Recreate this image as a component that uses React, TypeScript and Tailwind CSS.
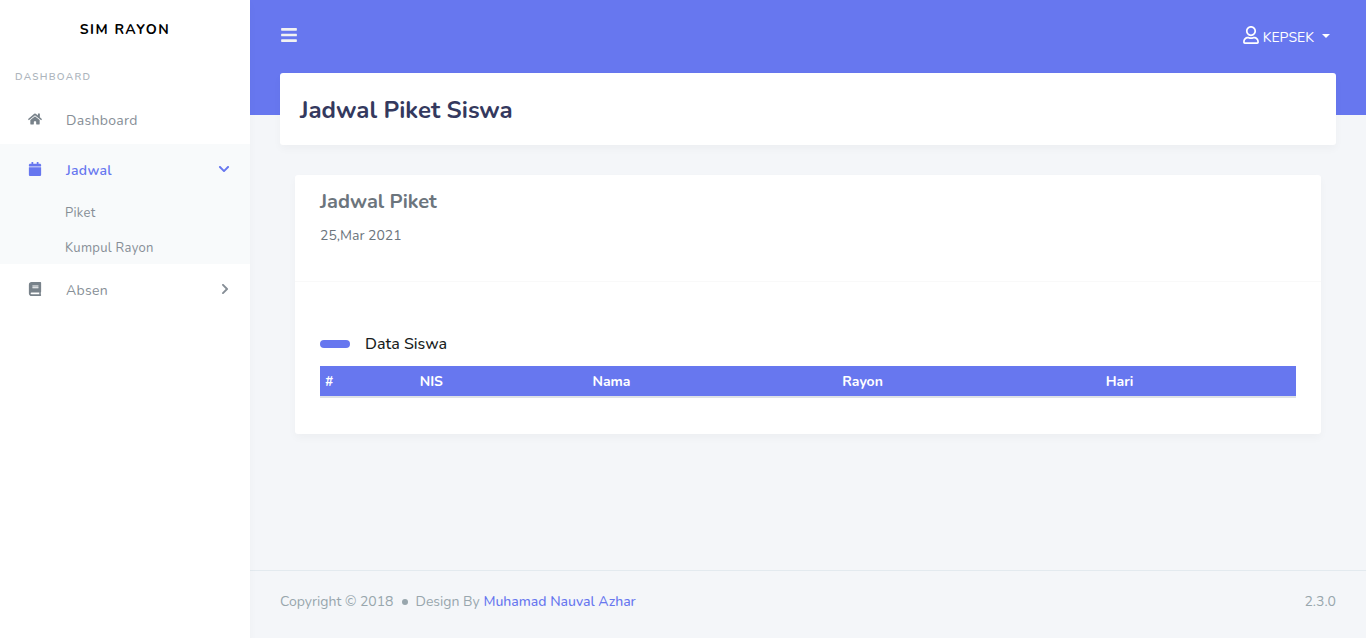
import type { ReactNode } from "react";
import { FaBars, FaBook, FaCalendar, FaChevronDown, FaChevronRight, FaHome, FaRegUser } from "react-icons/fa";

type MenuItemProps = {
  icon: ReactNode;
  label: string;
  caret?: ReactNode;
  active?: boolean;
};

function MenuItem({ icon, label, caret, active = false }: MenuItemProps) {
  return (
    <a
      href="#"
      className={
        active
          ? "flex h-[50px] items-center bg-[#f8fafb] px-5 font-semibold text-[#6777ef]"
          : "flex h-[50px] items-center px-5 text-[#868e96]"
      }
    >
      <span className={active ? "flex w-[30px] justify-center" : "flex w-[30px] justify-center text-[#78828a]"}>
        {icon}
      </span>
      <span className="ml-4 flex-1 pt-1 tracking-[0.3px]">{label}</span>
      {caret}
    </a>
  );
}

function Sidebar() {
  return (
    <aside className="z-10 w-[250px] shrink-0 bg-white shadow-[0_4px_8px_rgba(0,0,0,0.03)]">
      <a
        href="#"
        className="flex h-[60px] items-center justify-center text-[14px] font-bold uppercase tracking-[1.5px] text-black"
      >
        Sim Rayon
      </a>
      <nav>
        <h2 className="px-[15px] py-2 text-[10px] leading-[18px] font-semibold uppercase tracking-[1.3px] text-[#adb5bd]">
          Dashboard
        </h2>
        <MenuItem icon={<FaHome size={14} />} label="Dashboard" />
        <div className="bg-[#f8fafb]">
          <MenuItem icon={<FaCalendar size={14} />} label="Jadwal" active caret={<FaChevronDown size={12} />} />
          <ul className="text-[13px] text-[#868e96]">
            <li>
              <a href="#" className="flex h-[35px] items-center pt-0.5 pl-[65px] tracking-[0.3px]">
                Piket
              </a>
            </li>
            <li>
              <a href="#" className="flex h-[35px] items-center pt-0.5 pl-[65px] tracking-[0.3px]">
                Kumpul Rayon
              </a>
            </li>
          </ul>
        </div>
        <MenuItem icon={<FaBook size={14} />} label="Absen" caret={<FaChevronRight size={12} className="-mr-px" />} />
      </nav>
    </aside>
  );
}

export default function App() {
  return (
    <div className="flex min-h-screen bg-[#f4f6f9] font-['Nunito','Lato',sans-serif] text-[14px] leading-6 text-[#6c757d]">
      <Sidebar />
      <div className="flex min-w-0 flex-1 flex-col">
        <header className="flex h-[115px] items-start justify-between bg-[#6777ef] px-[30px] pt-[23px] text-white">
          <button type="button" aria-label="Toggle sidebar" className="flex h-6 items-center text-[#f2f2f2]">
            <FaBars size={18} />
          </button>
          <button type="button" className="flex h-6 items-center gap-[3px] pr-1.5">
            <FaRegUser size={18} />
            <span className="pt-1.5">KEPSEK</span>
            <span className="mt-0.5 ml-[5px] border-x-4 border-t-4 border-x-transparent border-t-white" />
          </button>
        </header>
        <main className="-mt-[42px] flex-1 px-[30px]">
          <div className="rounded-[3px] bg-white px-5 pt-[23px] pb-[21px] shadow-[0_4px_8px_rgba(0,0,0,0.03)]">
            <h1 className="text-[24px] leading-7 font-bold text-[#34395e]">Jadwal Piket Siswa</h1>
          </div>
          <section className="mx-[15px] mt-[30px] rounded-[3px] bg-white shadow-[0_4px_8px_rgba(0,0,0,0.03)]">
            <div className="h-[107px] border-b border-[#f9f9f9] px-[25px] pt-[15px]">
              <h2 className="text-[20px] font-bold">Jadwal Piket</h2>
              <p className="mt-[10px]">25,Mar 2021</p>
            </div>
            <div className="px-[25px] pt-[50px] pb-9">
              <h3 className="flex items-center gap-[15px] text-[16px] font-medium text-[#191d21]">
                <span className="h-2 w-[30px] rounded-full bg-[#6777ef]" />
                Data Siswa
              </h3>
              <table className="mt-[10px] w-full table-fixed border-collapse text-left">
                <thead className="border-b-2 border-[#dee2e6] bg-[#6777ef] text-white">
                  <tr className="h-[31px]">
                    <th className="w-[9.7%] px-[5px] pt-0.5 font-bold">#</th>
                    <th className="w-[17.7%] px-[5px] pt-0.5 font-bold">NIS</th>
                    <th className="w-[25.6%] px-[5px] pt-0.5 font-bold">Nama</th>
                    <th className="w-[27%] px-[5px] pt-0.5 font-bold">Rayon</th>
                    <th className="w-[20%] px-[5px] pt-0.5 font-bold">Hari</th>
                  </tr>
                </thead>
              </table>
            </div>
          </section>
        </main>
        <footer className="flex items-center justify-between border-t border-[#e3eaef] px-[30px] pt-[19px] pb-6 text-[#98a6ad]">
          <div className="flex items-center">
            <span>Copyright © 2018</span>
            <span className="mx-2 size-1.5 rounded-full bg-[#98a6ad]" />
            <span>
              Design By{" "}
              <a href="#" className="font-medium text-[#6777ef]">
                Muhamad Nauval Azhar
              </a>
            </span>
          </div>
          <span>2.3.0</span>
        </footer>
      </div>
    </div>
  );
}
